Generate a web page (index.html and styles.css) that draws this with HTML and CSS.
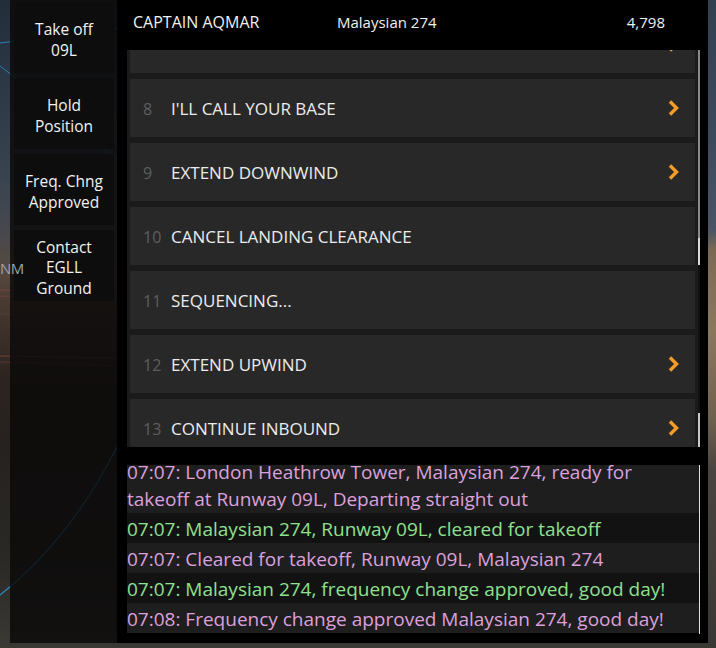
FILE: index.html
```html
<!DOCTYPE html>
<html>
<head>
<meta charset="utf-8">
<link rel="stylesheet" href="styles.css">
</head>
<body>
<div class="scene">
  <svg class="scene-lines" width="716" height="648" viewBox="0 0 716 648">
    <path d="M0 43 L120 28" stroke="#2b7fb0" stroke-width="1.2" fill="none"/>
    <path d="M0 66 Q60 110 118 160" stroke="#2b7fb0" stroke-width="1" fill="none"/>
    <path d="M90 150 L117 240" stroke="#2b6f9a" stroke-width="0.8" fill="none" opacity="0.6"/>
    <path d="M0 595 Q70 540 118 445" stroke="#2b8fc0" stroke-width="1.2" fill="none"/>
    <path d="M0 290 L117 292" stroke="#9a4a4a" stroke-width="0.8" fill="none" opacity="0.7"/>
    <path d="M0 296 L117 300" stroke="#9a4a4a" stroke-width="0.6" fill="none" opacity="0.6"/>
    <path d="M0 356 L117 358" stroke="#a05050" stroke-width="0.8" fill="none" opacity="0.7"/>
    <path d="M0 362 L117 366" stroke="#a05050" stroke-width="0.6" fill="none" opacity="0.6"/>
    <path d="M0 314 L117 318" stroke="#7a6060" stroke-width="0.6" fill="none" opacity="0.4"/>
    <path d="M708 30 L716 30" stroke="#7a8aa0" stroke-width="2" fill="none"/>
    <path d="M708 150 L716 150" stroke="#8a9ab0" stroke-width="2" fill="none"/>
  </svg>
</div>
<span class="map-label">NM</span>

<div class="layout">
  <aside class="sidebar">
    <div class="side-btn">Take off<br>09L</div>
    <div class="side-btn">Hold<br>Position</div>
    <div class="side-btn">Freq. Chng<br>Approved</div>
    <div class="side-btn">Contact<br>EGLL<br>Ground</div>
  </aside>

  <main class="panel">
    <header class="head">
      <span class="h-name">CAPTAIN AQMAR</span>
      <span class="h-call">Malaysian 274</span>
      <span class="h-alt">4,798</span>
    </header>

    <div class="list-wrap">
      <div class="list">
        <div class="item"><span class="num"></span><span class="lbl"></span><span class="chev"><svg width="14" height="18" viewBox="0 0 14 18"><path d="M3 2.5 L9.5 9 L3 15.5" stroke="#f39c2a" stroke-width="3.4" fill="none"/></svg></span></div>
        <div class="item"><span class="num">8</span><span class="lbl">I'LL CALL YOUR BASE</span><span class="chev"><svg width="14" height="18" viewBox="0 0 14 18"><path d="M3 2.5 L9.5 9 L3 15.5" stroke="#f39c2a" stroke-width="3.4" fill="none"/></svg></span></div>
        <div class="item"><span class="num">9</span><span class="lbl">EXTEND DOWNWIND</span><span class="chev"><svg width="14" height="18" viewBox="0 0 14 18"><path d="M3 2.5 L9.5 9 L3 15.5" stroke="#f39c2a" stroke-width="3.4" fill="none"/></svg></span></div>
        <div class="item"><span class="num">10</span><span class="lbl">CANCEL LANDING CLEARANCE</span></div>
        <div class="item"><span class="num">11</span><span class="lbl">SEQUENCING...</span></div>
        <div class="item"><span class="num">12</span><span class="lbl">EXTEND UPWIND</span><span class="chev"><svg width="14" height="18" viewBox="0 0 14 18"><path d="M3 2.5 L9.5 9 L3 15.5" stroke="#f39c2a" stroke-width="3.4" fill="none"/></svg></span></div>
        <div class="item"><span class="num">13</span><span class="lbl">CONTINUE INBOUND</span><span class="chev"><svg width="14" height="18" viewBox="0 0 14 18"><path d="M3 2.5 L9.5 9 L3 15.5" stroke="#f39c2a" stroke-width="3.4" fill="none"/></svg></span></div>
      </div>
      <div class="scroll"></div>
    </div>

    <div class="log-wrap">
      <div class="log">
        <div class="row pink odd">07:07: London Heathrow Tower, Malaysian 274, ready for takeoff at Runway 09L, Departing straight out</div>
        <div class="row green">07:07: Malaysian 274, Runway 09L, cleared for takeoff</div>
        <div class="row pink odd">07:07: Cleared for takeoff, Runway 09L, Malaysian 274</div>
        <div class="row green">07:07: Malaysian 274, frequency change approved, good day!</div>
        <div class="row pink odd">07:08: Frequency change approved Malaysian 274, good day!</div>
      </div>
      <div class="scroll log-scroll"></div>
    </div>
  </main>
</div>
</body>
</html>
```
FILE: styles.css
```css
* { box-sizing: border-box; }
html, body { margin: 0; padding: 0; }
body {
  width: 716px;
  height: 648px;
  overflow: hidden;
  position: relative;
  font-family: "Open Sans", "Noto Sans", sans-serif;
  background:
    linear-gradient(180deg,
      #222d3a 0px, #2c3846 80px, #3a4451 180px, #48484c 235px,
      #574a40 270px, #4a3a32 300px, #3a2e28 340px, #2c2420 380px,
      #26221f 450px, #2a2926 560px, #3a3934 648px);
}
.scene {
  position: absolute;
  inset: 0;
  z-index: 0;
}
.scene::after {
  content: "";
  position: absolute;
  top: 0; right: 0;
  width: 8px; height: 648px;
  background: linear-gradient(180deg,
    #33414f 0px, #3c4a5a 140px, #4a5564 230px, #7a6a55 250px,
    #8a7860 330px, #6e604e 420px, #4a4440 470px, #3a3834 648px);
}
.scene-lines { position: absolute; top: 0; left: 0; }
.map-label {
  position: absolute;
  left: 0;
  top: 258px;
  font-size: 15px;
  line-height: 20px;
  color: #a0a0a0;
  z-index: 3;
  letter-spacing: -0.5px;
}

.layout {
  position: relative;
  z-index: 1;
  display: flex;
  height: 643px;
  padding-left: 10px;
}

.sidebar {
  width: 107px;
  height: 643px;
  background: rgba(10, 8, 8, 0.82);
  padding: 2px 3px 0 4px;
  display: flex;
  flex-direction: column;
  gap: 5px;
}
.side-btn {
  height: 71px;
  background: #0d0d0d;
  color: #f2f2f2;
  font-size: 15.5px;
  line-height: 20.5px;
  text-align: center;
  display: flex;
  align-items: center;
  justify-content: center;
  padding-top: 4px;
}

.panel {
  width: 591px;
  height: 643px;
  background: #000;
  display: flex;
  flex-direction: column;
}
.head {
  height: 50px;
  display: flex;
  align-items: flex-start;
  padding: 12px 0 0 16px;
  color: #f0f0f0;
  font-size: 15px;
  line-height: 20px;
}
.h-name { width: 204px; font-size: 16px; }
.h-call { width: 180px; }
.h-alt { width: 148px; text-align: right; }

.list-wrap {
  height: 397px;
  margin-left: 10px;
  width: 573px;
  display: flex;
  background: #1b1b1b;
  overflow: hidden;
}
.list {
  width: 571px;
  padding-left: 3px;
  padding-right: 3px;
  margin-top: -35px;
  display: flex;
  flex-direction: column;
  gap: 6px;
}
.item {
  flex: 0 0 58px;
  height: 58px;
  background: #282828;
  display: flex;
  align-items: center;
  padding-top: 1px;
}
.num {
  width: 41px;
  padding-left: 13px;
  color: #5e5e5e;
  font-size: 16px;
}
.lbl {
  flex: 1;
  color: #ececec;
  font-size: 17px;
}
.chev {
  width: 28px;
  display: flex;
  align-items: center;
  margin-top: -2px;
}
.scroll {
  width: 2px;
  background: linear-gradient(180deg, #8a8a8a 0, #8a8a8a 188px, #d8d8d8 188px, #d8d8d8 215px, #111 215px, #111 363px, #c8c8c8 363px);
}

.log-wrap {
  margin-top: 18px;
  margin-left: 10px;
  width: 573px;
  height: 169px;
  display: flex;
  overflow: hidden;
}
.log {
  width: 572px;
  display: flex;
  flex-direction: column;
  margin-top: -9px;
}
.row {
  padding: 3px 0 0 0;
  line-height: 27px;
  font-size: 19px;
  background: #121212;
}
.row.odd { background: #1e1e1e; }
.pink { color: #dca0dc; }
.green { color: #8fe08f; }
.log-scroll {
  width: 1px;
  background: #e0e0e0;
}
```
